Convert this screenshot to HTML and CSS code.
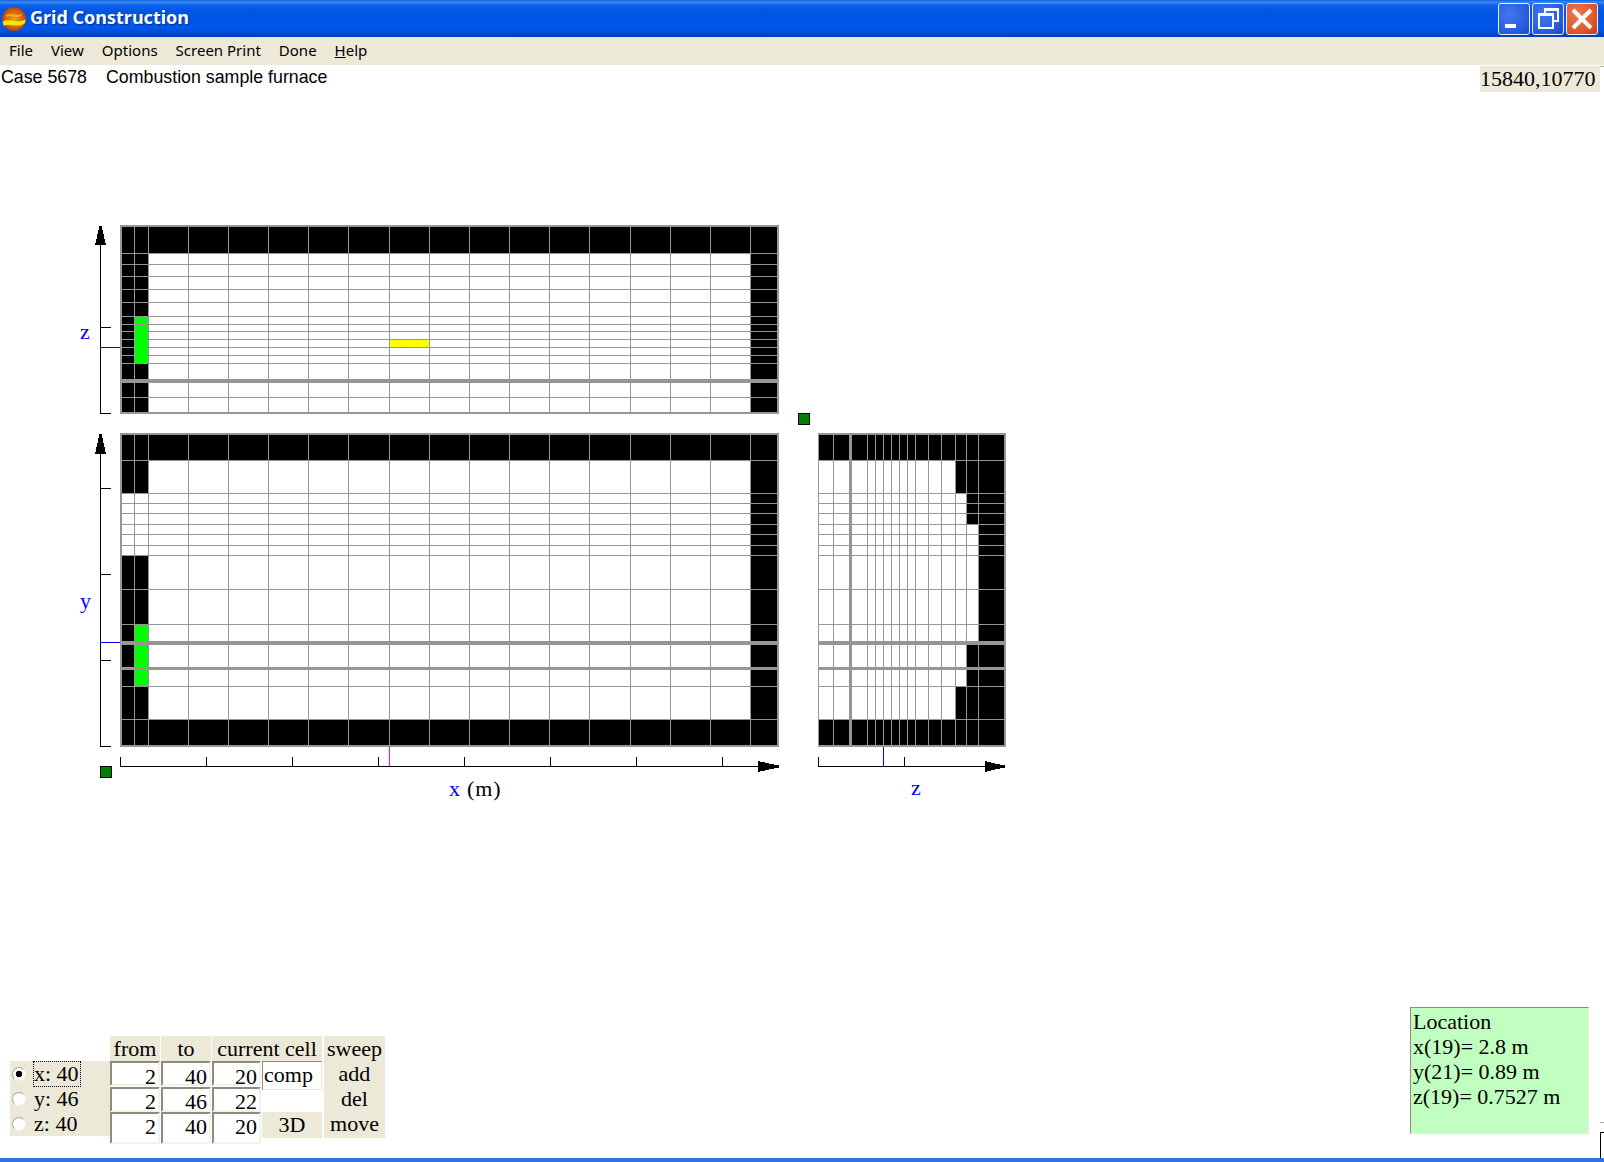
FILE: index.html
```html
<!DOCTYPE html>
<html lang="en">
<head>
    <meta charset="UTF-8">
    <meta name="viewport" content="width=device-width, initial-scale=1.0">
    <title>Grid Construction</title>
    <link rel="stylesheet" href="styles.css">
</head>
<body>
    <div class="window">
        <header class="titlebar">
            <svg class="app-icon" width="26" height="26" viewBox="0 0 26 26">
                <defs>
                    <radialGradient id="ball" cx="50%" cy="50%" r="55%">
                        <stop offset="0" stop-color="#f0a010"/>
                        <stop offset="0.7" stop-color="#d85a10"/>
                        <stop offset="1" stop-color="#8a3a10"/>
                    </radialGradient>
                </defs>
                <circle cx="13" cy="13" r="12" fill="url(#ball)"/>
                <path d="M1.5 16 C7 11 18 19 24.5 13 L24 17 C18 23 8 16 3 20 Z" fill="#f8e800"/>
                <path d="M5 9 C10 6 16 11 21 8 L20 10 C15 13 10 8 6 11 Z" fill="#f0b020"/>
            </svg>
            <span class="title-text">Grid Construction</span>
            <div class="win-buttons">
                <button class="win-btn" aria-label="Minimize">
                    <svg width="30" height="30" viewBox="0 0 30 30"><rect x="6" y="20" width="11" height="4" fill="#fff"/></svg>
                </button>
                <button class="win-btn" aria-label="Restore">
                    <svg width="30" height="30" viewBox="0 0 30 30">
                        <path d="M12 9V5H25V17H20" fill="none" stroke="#fff" stroke-width="2"/>
                        <rect x="6" y="10" width="14" height="14" fill="none" stroke="#fff" stroke-width="2"/>
                        <path d="M6 11H20M12 6H25" stroke="#fff" stroke-width="2"/>
                    </svg>
                </button>
                <button class="win-btn win-close" aria-label="Close">
                    <svg width="30" height="30" viewBox="0 0 30 30"><path d="M6 6L24 24M24 6L6 24" stroke="#fff" stroke-width="4"/></svg>
                </button>
            </div>
        </header>

        <nav class="menubar">
            <span>File</span>
            <span>View</span>
            <span>Options</span>
            <span>Screen Print</span>
            <span>Done</span>
            <span><u>H</u>elp</span>
        </nav>

        <div class="status-row">
            <div class="case-info">
                <span>Case 5678</span>
                <span>Combustion sample furnace</span>
            </div>
            <div class="coords">15840,10770</div>
        </div>

        <svg class="drawing" width="1040" height="620" viewBox="0 200 1040 620">
            <!-- top view -->
            <rect class="fill-black" x="121" y="226" width="657" height="27"/>
            <rect class="fill-black" x="121" y="253" width="27" height="160"/>
            <rect class="fill-green" x="135" y="316" width="13" height="47"/>
            <rect class="fill-black" x="751" y="253" width="27" height="160"/>
            <rect class="fill-yellow" x="390" y="340" width="39" height="7"/>
            <path class="gridline" d="M134.5 226V413M148.5 226V413M188.5 226V413M228.5 226V413M268.5 226V413M308.5 226V413M348.5 226V413M389.5 226V413M429.5 226V413M469.5 226V413M509.5 226V413M549.5 226V413M589.5 226V413M630.5 226V413M670.5 226V413M710.5 226V413M750.5 226V413"/>
            <path class="gridline" d="M121 253.5H778M121 264.5H778M121 276.5H778M121 289.5H778M121 302.5H778M121 316.5H778M121 324.5H778M121 331.5H778M121 339.5H778M121 347.5H778M121 355.5H778M121 363.5H778M121 397.5H778"/>
            <rect class="fill-grid" x="121" y="379" width="657" height="4"/>
            <rect class="frame" x="121" y="226" width="657" height="187"/>

            <!-- front view -->
            <rect class="fill-black" x="121" y="435" width="657" height="25"/>
            <rect class="fill-black" x="121" y="719" width="657" height="26"/>
            <rect class="fill-black" x="121" y="460" width="27" height="33"/>
            <rect class="fill-black" x="121" y="555" width="27" height="164"/>
            <rect class="fill-green" x="135" y="624" width="13" height="62"/>
            <rect class="fill-black" x="751" y="460" width="27" height="259"/>
            <path class="gridline" d="M134.5 435V745M148.5 435V745M188.5 435V745M228.5 435V745M268.5 435V745M308.5 435V745M348.5 435V745M389.5 435V745M429.5 435V745M469.5 435V745M509.5 435V745M549.5 435V745M589.5 435V745M630.5 435V745M670.5 435V745M710.5 435V745M750.5 435V745"/>
            <path class="gridline" d="M121 460.5H778M121 493.5H778M121 503.5H778M121 513.5H778M121 524.5H778M121 534.5H778M121 545.5H778M121 555.5H778M121 589.5H778M121 624.5H778M121 686.5H778M121 719.5H778"/>
            <rect class="fill-grid" x="121" y="641" width="657" height="4"/>
            <rect class="fill-grid" x="121" y="667" width="657" height="3"/>
            <rect class="frame" x="121" y="434" width="657" height="312"/>

            <!-- side view -->
            <rect class="fill-black" x="819" y="435" width="185" height="25"/>
            <rect class="fill-black" x="819" y="719" width="185" height="26"/>
            <rect class="fill-black" x="955" y="460" width="49" height="33"/>
            <rect class="fill-black" x="966" y="493" width="38" height="31"/>
            <rect class="fill-black" x="978" y="524" width="26" height="117"/>
            <rect class="fill-black" x="966" y="645" width="38" height="41"/>
            <rect class="fill-black" x="955" y="686" width="49" height="33"/>
            <path class="gridline" d="M818.5 434V746M833.5 435V745M867.5 435V745M875.5 435V745M883.5 435V745M891.5 435V745M899.5 435V745M907.5 435V745M915.5 435V745M928.5 435V745M941.5 435V745M955.5 435V745M966.5 435V745M978.5 435V745"/>
            <path class="gridline" d="M819 460.5H1004M819 493.5H1004M819 503.5H1004M819 513.5H1004M819 524.5H1004M819 534.5H1004M819 545.5H1004M819 555.5H1004M819 589.5H1004M819 624.5H1004M819 686.5H1004M819 719.5H1004"/>
            <rect class="fill-grid" x="819" y="641" width="186" height="4"/>
            <rect class="fill-grid" x="819" y="667" width="186" height="3"/>
            <rect class="fill-grid" x="849" y="435" width="3" height="310"/>
            <path class="frame-open" d="M818 434H1005V746H818"/>

            <!-- axes -->
            <path class="axis" d="M100.5 240V413.5H111M100.5 327.5H111"/>
            <path class="axis" d="M100.5 448V746.5H111M100.5 488.5H111M100.5 574.5H111M100.5 660.5H111"/>
            <path class="axis" d="M120.5 757V766.5H765M206.5 757V766M292.5 757V766M378.5 757V766M464.5 757V766M550.5 757V766M636.5 757V766M722.5 757V766"/>
            <path class="axis" d="M818.5 757V766.5H990M904.5 757V766"/>
            <path class="axis-blue" d="M100 347.5H120M100 642.5H120M883.5 747V766"/>
            <path class="axis-pink" d="M389.5 747V766"/>
            <polygon class="fill-black" points="99.5,226 101.5,226 106,245 95,245"/>
            <polygon class="fill-black" points="99.5,434 101.5,434 106,454 95,454"/>
            <polygon class="fill-black" points="758,761 769,763.5 779,765.5 779,767.5 769,769.5 758,772"/>
            <polygon class="fill-black" points="985,761 995,763.5 1005,765.5 1005,767.5 995,769.5 985,772"/>

            <!-- drag handles -->
            <rect class="handle" x="100.5" y="766.5" width="11" height="11"/>
            <rect class="handle" x="798.5" y="413.5" width="11" height="11"/>

            <!-- labels -->
            <text class="label label-blue" x="80" y="339">z</text>
            <text class="label label-blue" x="80" y="608">y</text>
            <text class="label label-wide" x="449" y="796"><tspan class="label-blue">x</tspan> (m)</text>
            <text class="label label-blue" x="911" y="795">z</text>
        </svg>

        <div class="bottom-row">
            <div class="cell-controls">
                <div class="axis-picker">
                    <label class="axis-option axis-focus"><input type="radio" name="axis" checked><span>x: 40</span></label>
                    <label class="axis-option"><input type="radio" name="axis"><span>y: 46</span></label>
                    <label class="axis-option"><input type="radio" name="axis"><span>z: 40</span></label>
                </div>
                <div class="cell-grid">
                    <div class="head">from</div>
                    <div class="head">to</div>
                    <div class="head head-wide">current cell</div>
                    <div class="sweep-col">
                        <div>sweep</div>
                        <div>add</div>
                        <div>del</div>
                        <div>move</div>
                    </div>
                    <div class="num num-first">2</div>
                    <div class="num num-first">40</div>
                    <div class="num num-first">20</div>
                    <div class="comp-box">comp</div>
                    <div class="num">2</div>
                    <div class="num">46</div>
                    <div class="num">22</div>
                    <div></div>
                    <div class="num num-tall">2</div>
                    <div class="num num-tall">40</div>
                    <div class="num num-tall">20</div>
                    <div class="btn-3d">3D</div>
                </div>
            </div>
            <div class="location">
                <div>Location</div>
                <div>x(19)= 2.8 m</div>
                <div>y(21)= 0.89 m</div>
                <div>z(19)= 0.7527 m</div>
            </div>
        </div>

        <div class="taskbar-edge"></div>
        <div class="edge-line edge-line-top"></div>
        <div class="edge-line edge-line-bottom"></div>
        <div class="edge-box"></div>
    </div>
</body>
</html>
```

FILE: styles.css
```css
html, body {
    margin: 0;
    padding: 0;
    background-color: white;
}
.window {
    position: relative;
    display: flex;
    flex-direction: column;
    width: 1604px;
    height: 1162px;
    overflow: hidden;
    font-family: "Liberation Serif", serif;
    font-size: 22px;
    color: black;
}

/* title bar */
.titlebar {
    display: flex;
    align-items: center;
    flex: none;
    height: 37px;
    background: linear-gradient(to bottom, #0a5cdc 0, #3c8cf4 2px, #0a62ea 5px, #0054e3 12px, #0058ea 28px, #0048cc 34px, #003cb4 37px);
}
.app-icon {
    flex: none;
    margin: 0 3px 0 1px;
}
.title-text {
    padding-bottom: 3px;
    font-family: "Noto Sans", sans-serif;
    font-size: 18px;
    font-weight: 700;
    color: white;
    text-shadow: 1px 1px 1px #0a2a90;
}
.win-buttons {
    display: flex;
    gap: 2px;
    margin-left: auto;
    margin-right: 6px;
}
.win-btn {
    width: 32px;
    height: 32px;
    padding: 0;
    border: 1px solid #e8eefc;
    border-radius: 3px;
    background: radial-gradient(circle at 35% 35%, #3f78ee 0, #2a5fe0 60%, #1c46c0 100%);
}
.win-btn svg {
    display: block;
}
.win-close {
    background: radial-gradient(circle at 35% 35%, #ec7a50 0, #e2582a 60%, #c23c14 100%);
}

/* menu */
.menubar {
    display: flex;
    align-items: center;
    gap: 18px;
    flex: none;
    box-sizing: border-box;
    height: 28px;
    padding: 0 0 2px 9px;
    background-color: #ece9d8;
    font-family: "Noto Sans", sans-serif;
    font-size: 15px;
}

/* case line */
.status-row {
    display: flex;
    justify-content: space-between;
    flex: none;
    height: 27px;
}
.case-info {
    display: flex;
    gap: 19px;
    padding: 2px 0 0 1px;
    font-family: "Liberation Sans", sans-serif;
    font-size: 17.8px;
    line-height: 20px;
}
.coords {
    width: 120px;
    height: 26px;
    margin: 1px 4px 0 0;
    background-color: #ece9d8;
    line-height: 26px;
}

/* drawing */
.drawing {
    display: block;
    flex: none;
    margin-top: 108px;
    shape-rendering: crispEdges;
}
.fill-black { fill: black; }
.fill-green { fill: #00ff00; }
.fill-yellow { fill: #ffff00; }
.fill-grid { fill: #969696; }
.gridline {
    fill: none;
    stroke: #969696;
    stroke-width: 1;
}
.frame, .frame-open {
    fill: none;
    stroke: #969696;
    stroke-width: 2;
}
.axis {
    fill: none;
    stroke: black;
    stroke-width: 1;
}
.axis-blue {
    fill: none;
    stroke: #0000ff;
    stroke-width: 1;
}
.axis-pink {
    fill: none;
    stroke: #ff00ff;
    stroke-width: 1;
}
.handle {
    fill: #008000;
    stroke: black;
    stroke-width: 1;
}
.label {
    font-family: "Liberation Serif", serif;
    font-size: 22px;
    fill: black;
    shape-rendering: auto;
}
.label-wide { letter-spacing: 0.8px; }
.label-blue { fill: #0000ff; }

/* bottom controls */
.bottom-row {
    display: flex;
    justify-content: space-between;
    align-items: flex-end;
    flex: none;
    margin-top: auto;
    margin-bottom: 4px;
}
.cell-controls {
    display: flex;
    align-items: flex-start;
    margin: 0 0 20px 10px;
}
.axis-picker {
    width: 100px;
    height: 75px;
    margin-top: 25px;
    background-color: #ece9d8;
}
.axis-option {
    display: flex;
    align-items: center;
    height: 25px;
    line-height: 24px;
}
.axis-option input {
    appearance: none;
    flex: none;
    width: 14px;
    height: 14px;
    margin: 0 8px 0 2px;
    border-radius: 50%;
    background: #fff;
    border: 1px solid #b0ad9e;
    border-right-color: #f6f5ee;
    border-bottom-color: #f6f5ee;
}
.axis-option input:checked {
    background: radial-gradient(circle, #000 0, #000 3px, #fff 3.6px);
}
.axis-focus span {
    outline: 1px dotted black;
    padding-right: 1px;
}
.cell-grid {
    display: grid;
    grid-template-columns: 50px 50px 49px 60px 62px;
    grid-template-rows: 25px 26px 25px 26px;
    column-gap: 1px;
}
.head {
    background-color: #ece9d8;
    text-align: center;
    line-height: 25px;
}
.head-wide {
    grid-column: span 2;
}
.sweep-col {
    grid-column: 5;
    grid-row: 1 / 5;
    margin-left: 1px;
    background-color: #ece9d8;
    text-align: center;
    line-height: 25px;
}
.num {
    box-sizing: border-box;
    height: 25px;
    padding-right: 2px;
    border: 2px solid;
    border-color: #8e8b7c #f4f2e8 #f4f2e8 #8e8b7c;
    background-color: white;
    text-align: right;
    line-height: 26px;
}
.num-first {
    line-height: 28px;
}
.num-tall {
    height: 32px;
}
.comp-box {
    box-sizing: border-box;
    height: 29px;
    padding-left: 1px;
    border: 1px solid;
    border-color: #8e8b7c #ece9d8 #ece9d8 #8e8b7c;
    background-color: white;
    line-height: 26px;
}
.btn-3d {
    height: 26px;
    background-color: #ece9d8;
    text-align: center;
    line-height: 26px;
}
.location {
    box-sizing: border-box;
    width: 179px;
    height: 127px;
    margin: 0 15px 24px 0;
    padding: 1px 0 0 2px;
    border: 1px solid;
    border-color: #8e8b7c #ece9d8 #ece9d8 #8e8b7c;
    background-color: #c0ffc0;
    line-height: 25px;
}
.taskbar-edge {
    position: absolute;
    left: 0;
    right: 0;
    bottom: 0;
    height: 4px;
    background-color: #2f74d8;
}
.edge-line {
    position: absolute;
    right: 0;
    width: 4px;
    height: 1px;
    background-color: #aca899;
}
.edge-line-top { top: 66px; }
.edge-line-bottom { top: 1122px; }
.edge-box {
    position: absolute;
    top: 1132px;
    left: 1600px;
    width: 4px;
    height: 26px;
    border-top: 1px solid black;
    border-left: 1px solid black;
    box-sizing: border-box;
}
```
